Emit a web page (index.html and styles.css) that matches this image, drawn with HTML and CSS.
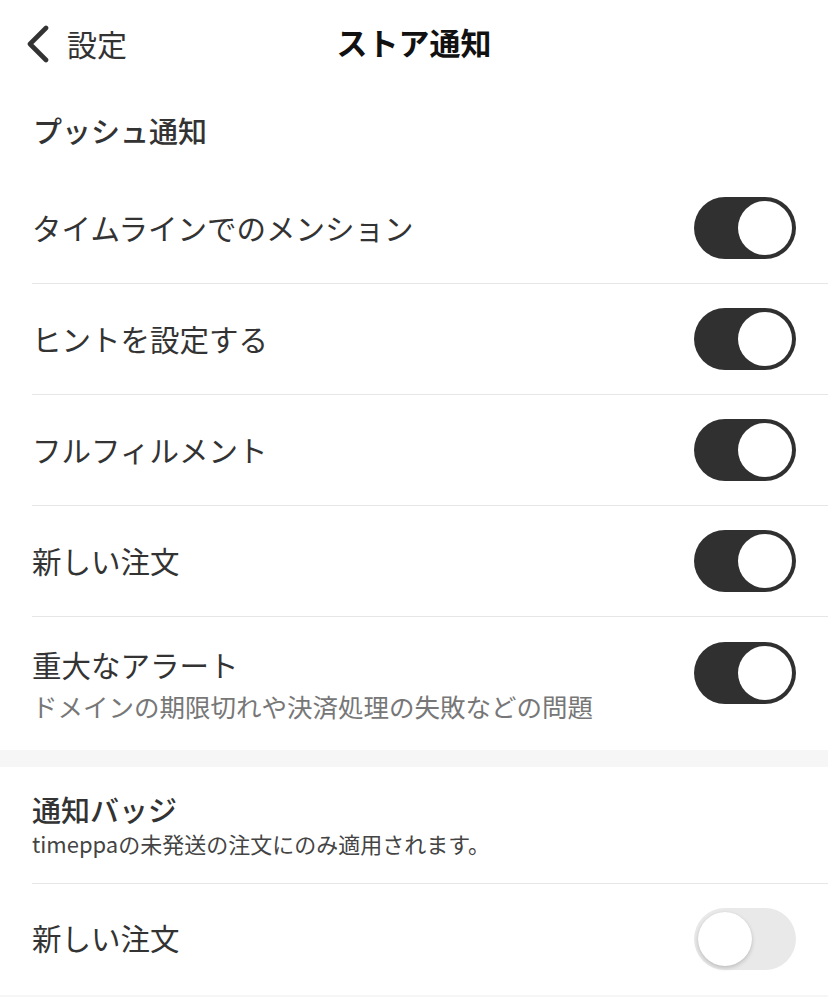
FILE: index.html
```html
<!DOCTYPE html>
<html lang="ja">
<head>
<meta charset="utf-8">
<link rel="stylesheet" href="styles.css">
</head>
<body>
<div class="page">
  <header class="nav">
    <div class="back">
      <svg class="chev" width="26" height="38" viewBox="0 0 26 38"><path d="M21 3 L5 19 L21 35" fill="none" stroke="#333" stroke-width="4.6" stroke-linecap="round" stroke-linejoin="round"/></svg>
      <span class="back-label">設定</span>
    </div>
    <h1 class="title">ストア通知</h1>
  </header>

  <section class="section">
    <h2 class="sec-head">プッシュ通知</h2>
    <div class="row"><span class="label">タイムラインでのメンション</span><span class="toggle on"><span class="knob"></span></span></div>
    <div class="row"><span class="label">ヒントを設定する</span><span class="toggle on"><span class="knob"></span></span></div>
    <div class="row"><span class="label">フルフィルメント</span><span class="toggle on"><span class="knob"></span></span></div>
    <div class="row"><span class="label">新しい注文</span><span class="toggle on"><span class="knob"></span></span></div>
    <div class="row tall last">
      <div class="texts"><span class="label">重大なアラート</span><span class="sub">ドメインの期限切れや決済処理の失敗などの問題</span></div>
      <span class="toggle on"><span class="knob"></span></span>
    </div>
  </section>

  <div class="band"></div>

  <section class="section">
    <div class="sec-head2">
      <h2 class="sec-title">通知バッジ</h2>
      <p class="sec-sub">timeppaの未発送の注文にのみ適用されます。</p>
    </div>
    <div class="row last"><span class="label">新しい注文</span><span class="toggle off"><span class="knob"></span></span></div>
  </section>

  <div class="band"></div>
</div>
</body>
</html>
```

FILE: styles.css
```css
* { box-sizing: border-box; margin: 0; padding: 0; }
body {
  background: #fff;
  font-family: "Noto Sans CJK JP", "Noto Sans", sans-serif;
  color: #333;
  width: 828px;
  overflow: hidden;
}
.page { width: 828px; }
.nav {
  height: 90px;
  position: relative;
  display: flex;
  align-items: center;
  justify-content: center;
}
.back {
  position: absolute;
  left: 25px;
  top: 25px;
  display: flex;
  align-items: center;
  gap: 16px;
}
.chev { display: block; }
.back-label {
  font-size: 30px;
  line-height: 38px;
  color: #333;
  margin-top: -2px;
}
.title {
  font-size: 31px;
  font-weight: 700;
  color: #111;
  line-height: 1;
  margin-top: -8px;
}
.sec-head {
  height: 83px;
  display: flex;
  align-items: center;
  padding-left: 33px;
  font-size: 29px;
  font-weight: 500;
  color: #333;
  padding-bottom: 4px;
}
.row {
  margin-left: 32px;
  padding-right: 32px;
  height: 111px;
  border-bottom: 1.5px solid #e6e6e6;
  display: flex;
  align-items: center;
  justify-content: space-between;
}
.row.last { border-bottom: none; }
.row.tall { height: 133px; align-items: flex-start; }
.row.tall .texts { padding-top: 27px; display: flex; flex-direction: column; }
.row.tall .toggle { margin-top: 25px; }
.label {
  font-size: 29.5px;
  line-height: 44px;
  color: #333;
  margin-top: -2px;
}
.sub {
  font-size: 25.5px;
  line-height: 40px;
  color: #777;
}
.toggle {
  width: 102px;
  height: 62px;
  border-radius: 31px;
  position: relative;
  flex-shrink: 0;
}
.toggle.on { background: #303030; }
.toggle.off { background: #e9e9ea; }
.knob {
  position: absolute;
  top: 4px;
  width: 54px;
  height: 54px;
  border-radius: 50%;
  background: #fff;
}
.toggle.on .knob { right: 4px; }
.toggle.off .knob { left: 4px; box-shadow: 0 2px 4px rgba(0,0,0,0.18), 0 0 1px rgba(0,0,0,0.1); }
.band { height: 17px; background: #f6f6f6; }
.sec-head2 {
  margin-left: 32px;
  height: 117px;
  border-bottom: 1.5px solid #e6e6e6;
  padding-top: 21px;
}
.sec-title {
  font-size: 29px;
  font-weight: 500;
  line-height: 42px;
  color: #333;
}
.sec-sub {
  font-size: 22px;
  line-height: 30px;
  color: #444;
  margin-top: -2px;
}
.section:last-of-type .row.last .label { margin-top: -6px; }
.section:last-of-type .row.last .toggle { margin-top: -2px; }
```
